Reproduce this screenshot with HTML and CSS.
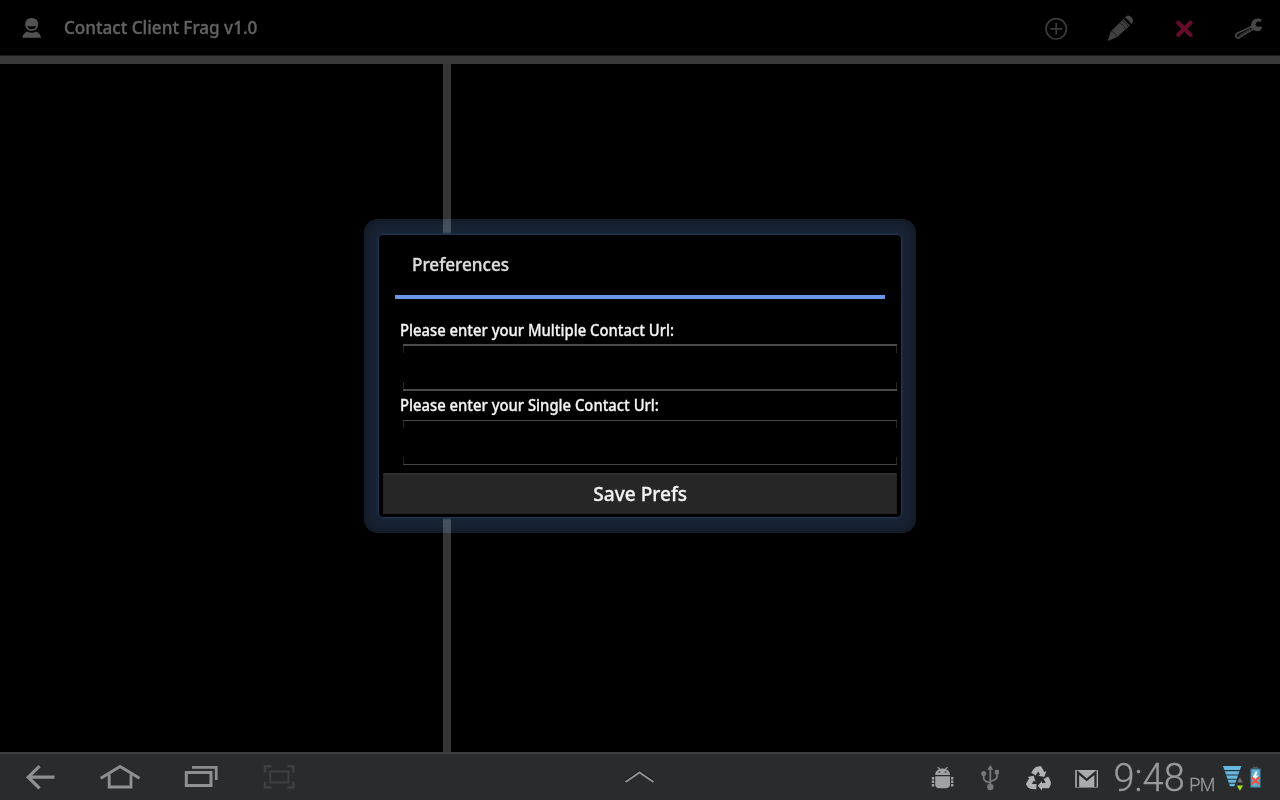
FILE: index.html
```html
<!DOCTYPE html>
<html lang="en">
<head>
<meta charset="utf-8">
<title>Contact Client Frag v1.0</title>
<link rel="stylesheet" href="styles.css">
</head>
<body>
<header class="action-bar">
  <svg class="app-icon" viewBox="20 14 24 28" width="24" height="28">
    <g fill="#535353"><path fill-rule="evenodd" d="M31.700 18C27.500 18 25.200 20.800 25.200 24.300C25.200 28 28 31 31.700 31S38.200 28 38.200 24.300C38.200 20.800 35.900 18 31.700 18ZM27.300 25.700Q31.700 27.300 36.100 25.700Q35 29.300 31.700 29.300T27.300 25.700Z"/><path d="M22.300 37.800C22.600 34.500 24.700 32.700 27.400 31.400Q31.700 34.300 36 31.400C38.800 32.700 40.800 34.500 41.100 37.800Z"/></g>
  </svg>
  <h1 class="app-title">Contact Client Frag v1.0</h1>
  <nav class="actions">
    <svg viewBox="1024 0 64 56"><g fill="none" stroke="#3b3b3b" stroke-width="1.700"><circle cx="1056.200" cy="28.800" r="10.200"/><path d="M1056.200 23v11.600M1050.400 28.800h11.600"/></g></svg>
    <svg viewBox="1088 0 64 56"><path fill="#414141" d="M1107.700 41L1110.700 31.500L1123.500 19L1130 25.400L1116.800 37.200Z"/><path fill="#454545" d="M1125 17.500Q1127 14.700 1129.500 15.800Q1132.600 17.300 1133 20.200Q1133.100 22.400 1131.300 24Z"/><path d="M1111.100 31.500Q1115.300 31.900 1116.500 36.800M1119.400 23Q1124 24.200 1125.600 29M1121.900 20.400Q1126.500 21.700 1128.200 26.500M1124.500 17.900Q1129.300 19.200 1130.900 24.200" fill="none" stroke="#151515" stroke-width=".8"/></svg>
    <svg viewBox="1152 0 64 56"><path d="M1178.200 22.700L1190.500 34.700M1190.500 22.700L1178.200 34.700" stroke="#650b2b" stroke-width="4.200" stroke-linecap="round"/></svg>
    <svg viewBox="1216 0 64 56"><path d="M1252.200 26.200L1237.300 33.300Q1234.800 35 1236.200 37.200Q1237.400 38.700 1239.500 37.300L1254 28.500" fill="none" stroke="#424242" stroke-width="1.800"/><path d="M1239.200 35.500L1250 29.300" stroke="#343434" stroke-width="1.200"/><path fill="#464646" d="M1257.800 18.500Q1251.400 19.100 1251.300 24.300L1250.200 27.200L1254.300 30.500Q1260 32.800 1262 27.700L1261.500 26.600L1257.200 26.800L1255.300 24.400L1257 21.800L1261.300 21.400L1261.400 19.300Q1259.600 18.300 1257.800 18.500Z"/></svg>
  </nav>
</header>
<main class="panes">
  <section class="pane-list"></section>
  <section class="pane-detail"></section>
</main>
<form class="dialog">
  <div class="dialog-content">
    <h2 class="dialog-title"><span>Preferences</span></h2>
    <label class="label multi">Please enter your Multiple Contact Url:</label>
    <div class="field focused"></div>
    <label class="label single">Please enter your Single Contact Url:</label>
    <div class="field"></div>
    <button class="save" type="button"><span>Save Prefs</span></button>
  </div>
</form>
<footer class="system-bar">
  <svg class="nav-icons" viewBox="0 754 320 46" width="320" height="46">
    <defs><linearGradient id="metal" gradientUnits="userSpaceOnUse" x1="0" y1="764" x2="0" y2="790"><stop stop-color="#8b8c8c"/><stop offset="1" stop-color="#929393"/></linearGradient></defs>
    <g fill="none" stroke="url(#metal)" stroke-width="3.200">
      <path d="M54.500 777.200L29 777.210M39.600 766.100L28.200 777.200L39.600 788.300"/>
      <path d="M100.800 778.300L120.100 766.500L139.500 778.300" stroke-width="3"/>
      <path d="M109.200 774.500V787H131V774.500" stroke-width="2.800"/>
      <path d="M186.300 772.600H211V785.500H186.300Z" stroke-width="3"/>
      <path d="M192 767.300H216.200V780" stroke-width="2.700"/>
    </g>
    <g fill="none" stroke="#3f4041" stroke-width="2.500"><path d="M265 772.500V766.200H271.500M287.500 766.200H293.300V772.500M293.300 781.500V787.500H287.500M271.500 787.500H265V781.500"/><path d="M270.200 771.500H288.500V782.500H270.200Z" stroke-width="2"/></g>
  </svg>
  <svg class="handle" viewBox="600 754 80 46" width="80" height="46"><path d="M625.500 781L639.500 771.500L653.500 781" fill="none" stroke="#151617" stroke-width="2.200"/><path d="M625.500 782L639.500 772.500L653.500 782" fill="none" stroke="#909191" stroke-width="2"/></svg>
  <div class="status">
    <svg viewBox="920 754 190 46" width="190" height="46">
      <g fill="#a1a2a2"><path d="M935.200 775Q935.200 770.800 939 769.200L937.300 767.400L938 766.800L940.100 768.800Q942.500 768 945 768.800L947.100 766.800L947.800 767.400L946.100 769.200Q950 771 950 775ZM935.200 776.300H950V784.500Q950 788.300 945.500 788.300H939.700Q935.200 788.300 935.200 784.500Z"/></g>
      <path d="M938.700 772.100h1.500M944.900 772.100h1.500" stroke="#292b2d" stroke-width="1.300"/>
      <path d="M934.200 778.200H931.800M934.200 781.700H931.800M934.200 785.200H931.800M951 778.200H953.400M951 781.700H953.400M951 785.200H953.400" stroke="#a1a2a2" stroke-width="2.400"/>
      <g stroke="#777979" stroke-width="1.800" fill="none"><path d="M990.300 767V787M983.700 775V778.500Q983.700 781 990.300 783M997 773V776.500Q997 780 990.300 781.200"/></g>
      <g fill="#777979"><path d="M987.200 769.700L990.300 764.900L993.400 769.700Z"/><circle cx="990.300" cy="787" r="3.200"/><circle cx="983.700" cy="773.500" r="2.500"/><rect x="994.800" y="769.900" width="4.200" height="4.200"/></g>
      <defs><g id="arrow"><path d="M7.300 -1.700L9.300 2.100Q10.200 4 8.800 6.200H2.500" fill="none" stroke="#b2b3b3" stroke-width="5.200"/><path d="M3.400 1.500V11L-.8 6.200Z" fill="#b2b3b3"/></g></defs>
      <g transform="translate(1038.600 779.500)"><use href="#arrow"/><use href="#arrow" transform="rotate(120)"/><use href="#arrow" transform="rotate(240)"/></g>
      <path fill="#ababab" d="M1075.200 770h22.800v17.600h-22.800z"/><path d="M1078 787V772.500L1086.700 779.800L1095.500 772.500V787" fill="none" stroke="#292a2b" stroke-width="2.300"/>
    </svg>
    <div class="clock"><span class="time">9:48</span><span class="period">PM</span></div>
    <svg class="signal" viewBox="1220 754 48 46" width="48" height="46">
      <path d="M1223 766H1241.300L1234.300 786.300H1230Z" fill="#66b8df"/>
      <path d="M1222 770.600H1242M1222 775H1242M1222 779.300H1242M1222 783.200H1236" stroke="#29333a" stroke-width="1.100"/>
      <path d="M1236.700 782.700L1239.900 776.700L1243.100 782.700Z" fill="#737575" stroke="#292a2c" stroke-width=".7"/>
      <path d="M1236.500 785.200H1243.400L1239.900 791.300Z" fill="#a3e620" stroke="#292a2c" stroke-width=".5"/>
      <path d="M1252.900 766.700h5v2h-5z" fill="#505a5e"/>
      <path d="M1250.300 768.500h10.500v19.300h-10.500z" fill="#3e6c83"/><path d="M1251.400 769.400h8.300v17.300h-8.300z" fill="#62aed1"/>
      <path d="M1255.700 771.500L1252.400 777.400H1254.800L1253.500 782L1258.700 775.500H1256L1257.800 771.500Z" fill="#effafc"/>
      <path d="M1251.600 777.400L1258.900 784.200M1258.900 777.400L1251.600 784.200" stroke="#ed5545" stroke-width="2.300"/>
    </svg>
  </div>
</footer>
</body>
</html>
```
FILE: styles.css
```css
* { box-sizing: border-box; }
body {
  margin: 0;
  width: 1280px;
  height: 800px;
  overflow: hidden;
  background: #000;
  display: flex;
  flex-direction: column;
  position: relative;
  font-family: "Noto Sans", "Open Sans", sans-serif;
}
svg { display: block; flex: none; }
h1, h2 { margin: 0; }
.action-bar {
  height: 64px;
  flex: none;
  display: flex;
  align-items: flex-start;
  padding-left: 20px;
  border-bottom: 8px solid #393939;
  box-shadow: inset 0 -1px #1b1b1b;
}
.app-icon { margin-top: 14px; }
.app-title {
  margin-left: 19.500px;
  font-size: 18px;
  font-weight: 500;
  line-height: 55px;
  color: #626262;
  -webkit-text-stroke: .35px #626262;
  white-space: nowrap;
  transform: scaleX(.95);
  transform-origin: 0 50%;
}
.actions { display: flex; margin-left: auto; }
.actions svg { width: 64px; height: 56px; }
.panes { flex: 1; display: flex; }
.pane-list { width: 451px; border-right: 8px solid #363636; }
.pane-detail { flex: 1; }
.dialog {
  position: absolute;
  left: 364px;
  top: 219px;
  width: 552px;
  height: 314px;
  padding: 15px 14px 15px 14px;
}
/* Glow frame that lightens whatever lies beneath the window */
.dialog::before {
  content: "";
  position: absolute;
  inset: 0;
  border-radius: 14px;
  background: #172233;
  box-shadow: inset 0 0 9px 1px #10171d;
  mix-blend-mode: screen;
}
.dialog-content {
  position: relative;
  height: 284px;
  border: 1px solid #233350;
  border-radius: 5px;
  background: #000;
  box-shadow: 0 0 2px 1px #1c2a43;
  padding: 0 4px;
  display: flex;
  flex-direction: column;
}
.dialog-title {
  height: 64px;
  margin: 0 12px;
  padding-left: 16.500px;
  border-bottom: 4px solid #6b96e8;
  font-size: 18px;
  font-weight: 500;
  line-height: 59px;
  color: #dedede;
  -webkit-text-stroke: .35px #dedede;
}
.dialog-title span {
  display: inline-block;
  transform: scaleX(.95);
  transform-origin: 0 50%;
}
.label {
  display: block;
  margin-left: 16.500px;
  font-size: 16px;
  font-weight: 500;
  color: #f4f4f4;
  -webkit-text-stroke: .3px #f4f4f4;
  white-space: nowrap;
  transform: scaleX(.926);
  transform-origin: 0 50%;
}
.multi { margin-top: 20px; height: 25px; line-height: 22px; }
.single { height: 29px; line-height: 28px; }
.field {
  flex: none;
  height: 45px;
  margin-left: 20px;
  border-top: 1px solid #484848;
  border-bottom: 1px solid #434343;
  background:
    linear-gradient(#252525, #252525) 0 0 / 1px 7px no-repeat,
    linear-gradient(#252525, #252525) 100% 0 / 1px 7px no-repeat,
    linear-gradient(#252525, #252525) 0 100% / 1px 7px no-repeat,
    linear-gradient(#252525, #252525) 100% 100% / 1px 7px no-repeat;
}
.field.focused { height: 47px; border-width: 2px; border-color: #4b4b4b; }
.save {
  flex: none;
  height: 41px;
  margin: 8px 0 0;
  padding: 0 0 2px;
  border: 1px solid #222;
  border-top: 2px solid #2e2e2e;
  border-radius: 1px;
  background: #262626;
  font: 500 20px/35px "Noto Sans", "Open Sans", sans-serif;
  color: #f3f3f3;
  -webkit-text-stroke: .3px #f3f3f3;
}
.save span { display: inline-block; transform: scaleX(.955); }
.system-bar {
  height: 48px;
  flex: none;
  display: flex;
  background: linear-gradient(#292b2c, #2a2b2d);
  border-top: 2px solid #3c3e3f;
}
.handle { margin-left: 280px; }
.status { display: flex; margin-left: 240px; }
.clock {
  width: 110px;
  display: flex;
  align-items: baseline;
  padding-left: 3.500px;
  font-family: Roboto, "Liberation Sans", sans-serif;
  font-weight: 300;
  line-height: 48px;
  color: #999b9c;
  -webkit-text-stroke: .3px #999b9c;
  white-space: nowrap;
}
.time { font-size: 38px; }
.period { font-size: 18px; margin-left: 4.500px; letter-spacing: -.5px; }
```
